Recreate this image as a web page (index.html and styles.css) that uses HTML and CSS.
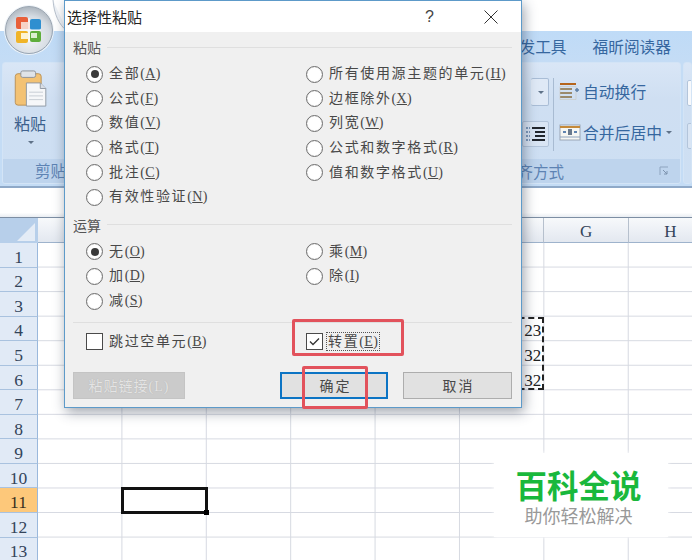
FILE: index.html
```html
<!DOCTYPE html>
<html lang="zh-CN">
<head>
<meta charset="utf-8">
<title>选择性粘贴</title>
<link rel="stylesheet" href="styles.css">
</head>
<body>
<div class="app">
  <header class="top">
    <div class="office-btn">
      <svg width="30" height="30" viewBox="0 0 30 30">
        <rect x="2" y="2" width="12" height="12" rx="2" fill="#e8603a"/>
        <rect x="16" y="4" width="11" height="11" rx="2" fill="#2f8fd0"/>
        <rect x="2" y="16" width="12" height="12" rx="2" fill="#f0b428"/>
        <rect x="16" y="16" width="11" height="11" rx="2" fill="#5fae3c"/>
        <rect x="7" y="7" width="9" height="7" fill="#f6d3c6"/>
        <rect x="7" y="18" width="8" height="6" fill="#fdf3d2"/>
        <rect x="17" y="18" width="6" height="5" fill="#dcefd0"/>
        <path d="M15 3v24M3 15h24" stroke="#fff" stroke-opacity=".65" stroke-width="1.5"/>
      </svg>
    </div>
    <svg class="qat-arc" width="16" height="32" viewBox="0 0 16 32"><path d="M1 0c1 14 6 25 14 31" fill="#eef2f7" stroke="#b9c2cd"/></svg>
  </header>
  <nav class="tabs">
    <span>发工具</span>
    <span>福昕阅读器</span>
  </nav>
  <section class="ribbon">
    <div class="group group-clip">
      <div class="group-body">
        <div class="paste">
          <svg width="34" height="37" viewBox="0 0 36 40">
            <rect x="1" y="4" width="28" height="34" rx="3" fill="#f3c274" stroke="#b98f55"/>
            <rect x="7" y="1" width="16" height="7" rx="2" fill="#dfe3e8" stroke="#8b8f96"/>
            <path d="M13 14h15l6 6v19H13z" fill="#f6f7f9" stroke="#8d96a2"/>
            <path d="M28 14v6h6" fill="#d9dee5" stroke="#8d96a2"/>
            <path d="M16 24h15M16 28h15M16 32h15" stroke="#c5cbd3"/>
          </svg>
          <span class="paste-label">粘贴</span>
          <i class="caret"></i>
        </div>
      </div>
      <div class="group-label label-clip">剪贴板</div>
    </div>
    <div class="group group-align">
      <div class="group-body align-body">
        <div class="tool-col">
          <div class="combo-end"><i class="caret"></i></div>
          <div class="indent-btn">
            <svg width="22" height="18" viewBox="0 0 22 18"><path d="M1 3h4M1 7h4M1 11h4M1 15h4" stroke="#5d7fa6" stroke-width="1.5" stroke-dasharray="2 1"/><path d="M7 3h13M10 7h10M10 11h10M7 15h13" stroke="#22272e" stroke-width="2"/></svg>
          </div>
        </div>
        <div class="sep"></div>
        <div class="cmd-col">
          <div class="cmd">
            <svg width="22" height="20" viewBox="0 0 22 20"><path d="M1 3h16" stroke="#b5651d" stroke-width="2"/><path d="M1 8h12M1 12h12M1 16h12" stroke="#9a8a6c" stroke-width="2"/><path d="M1 5.500h16v13H1z" fill="none" stroke="#c9c2b2" stroke-width=".5"/><path d="M16 9h4M18 7v4" stroke="#5d7fa6" stroke-width="1.500"/></svg>
            <span>自动换行</span>
          </div>
          <div class="cmd">
            <svg width="22" height="20" viewBox="0 0 22 20"><rect x="1" y="3" width="20" height="15" fill="#f7f7f2" stroke="#9aa6b5"/><path d="M1 5h20" stroke="#c58a3a" stroke-width="2"/><path d="M1 15h20" stroke="#8fa4bd"/><path d="M4 10h3M15 10h3" stroke="#2f5f9a" stroke-width="1.500"/><rect x="9" y="7" width="4" height="6" fill="#6a7a8c"/></svg>
            <span>合并后居中</span>
            <i class="caret"></i>
          </div>
        </div>
      </div>
      <div class="group-label label-align">
        <span>齐方式</span>
        <svg width="10" height="10" viewBox="0 0 10 10"><path d="M1 9V1h8" fill="none" stroke="#8ea4bf"/><path d="M4 4l4 4M8 5v3H5" fill="none" stroke="#7d93ae"/></svg>
      </div>
    </div>
    <div class="group group-next">
      <div class="next-a"></div>
      <div class="next-b"></div>
    </div>
  </section>
  <div class="formula"><div class="name-box"></div></div>
  <main class="sheet">
    <div class="corner"></div>
    <div class="col-h"></div><div class="col-h"></div><div class="col-h"></div><div class="col-h"></div><div class="col-h"></div><div class="col-h"></div><div class="col-h">G</div><div class="col-h">H</div>
    <div class="row-h">1</div><div class="row-h">2</div><div class="row-h">3</div><div class="row-h">4</div><div class="row-h">5</div><div class="row-h">6</div><div class="row-h">7</div><div class="row-h">8</div><div class="row-h">9</div><div class="row-h">10</div>
    <div class="row-h row-active">11</div><div class="row-h">12</div><div class="row-h">13</div>
    <div class="val r4">23</div>
    <div class="val r5">32</div>
    <div class="val r6">32</div>
    <div class="ants"></div>
    <div class="selected"></div>
  </main>
</div>

<div class="dialog">
  <div class="dlg-title">
    <span class="dlg-name">选择性粘贴</span>
    <span class="dlg-help">?</span>
    <svg class="dlg-close" width="14" height="14" viewBox="0 0 14 14"><path d="M0.500 0.500l13 13M13.500 0.500l-13 13" stroke="#333" stroke-width="1"/></svg>
  </div>
  <div class="dlg-body">
    <div class="legend"><span>粘贴</span></div>
    <div class="opts opts-paste">
      <label class="opt"><i class="radio on"></i>全部<b class="key">(<u>A</u>)</b></label>
      <label class="opt"><i class="radio"></i>所有使用源主题的单元<b class="key">(<u>H</u>)</b></label>
      <label class="opt"><i class="radio"></i>公式<b class="key">(<u>F</u>)</b></label>
      <label class="opt"><i class="radio"></i>边框除外<b class="key">(<u>X</u>)</b></label>
      <label class="opt"><i class="radio"></i>数值<b class="key">(<u>V</u>)</b></label>
      <label class="opt"><i class="radio"></i>列宽<b class="key">(<u>W</u>)</b></label>
      <label class="opt"><i class="radio"></i>格式<b class="key">(<u>T</u>)</b></label>
      <label class="opt"><i class="radio"></i>公式和数字格式<b class="key">(<u>R</u>)</b></label>
      <label class="opt"><i class="radio"></i>批注<b class="key">(<u>C</u>)</b></label>
      <label class="opt"><i class="radio"></i>值和数字格式<b class="key">(<u>U</u>)</b></label>
      <label class="opt"><i class="radio"></i>有效性验证<b class="key">(<u>N</u>)</b></label>
    </div>
    <div class="legend legend-op"><span>运算</span></div>
    <div class="opts opts-op">
      <label class="opt"><i class="radio on"></i>无<b class="key">(<u>O</u>)</b></label>
      <label class="opt"><i class="radio"></i>乘<b class="key">(<u>M</u>)</b></label>
      <label class="opt"><i class="radio"></i>加<b class="key">(<u>D</u>)</b></label>
      <label class="opt"><i class="radio"></i>除<b class="key">(<u>I</u>)</b></label>
      <label class="opt"><i class="radio"></i>减<b class="key">(<u>S</u>)</b></label>
    </div>
    <hr class="rule">
    <div class="opts opts-check">
      <label class="opt"><i class="check"></i>跳过空单元<b class="key">(<u>B</u>)</b></label>
      <label class="opt"><i class="check">
        <svg width="15" height="15" viewBox="0 0 15 15"><path d="M3 7.500l3 3 6-6" fill="none" stroke="#333" stroke-width="1.300"/></svg>
      </i><span class="focus">转置<b class="key">(<u>E</u>)</b></span></label>
    </div>
    <div class="btns">
      <button class="btn btn-off" type="button">粘贴链接(L)</button>
      <button class="btn btn-ok" type="button">确定</button>
      <button class="btn btn-cancel" type="button">取消</button>
    </div>
  </div>
</div>

<div class="mark mark-transpose"></div>
<div class="mark mark-ok"></div>

<aside class="watermark">
  <div class="wm-title">百科全说</div>
  <div class="wm-sub">助你轻松解决</div>
</aside>
</body>
</html>
```
FILE: styles.css
```css
* { box-sizing: border-box; }
html, body { margin: 0; height: 100%; }
body {
  position: relative;
  width: 692px;
  height: 560px;
  overflow: hidden;
  background: #fff;
  font-family: "Noto Sans CJK SC", "Liberation Sans", sans-serif;
}
.app { display: flex; flex-direction: column; height: 560px; overflow: hidden; }

/* title strip */
.top { height: 31px; background: #fff; flex: none; position: relative; }
.office-btn {
  position: absolute; left: 5px; top: 6px; z-index: 2;
  width: 48px; height: 48px; border-radius: 50%;
  display: flex; align-items: center; justify-content: center;
  background: radial-gradient(circle at 50% 65%, #f4f6f8 0, #d5dbe2 55%, #a9b2bb 82%, #e4e8ec 100%);
  border: 1px solid #9aa5b1;
  box-shadow: 0 0 0 1px #eef3f8;
}
.qat-arc { position: absolute; left: 52px; top: 0; }

/* tabs */
.tabs {
  height: 31px; flex: none;
  background: linear-gradient(#bfdbf7, #c4dcf5);
  display: flex; justify-content: flex-end; align-items: center; gap: 26px;
  padding: 0 21px 0 0;
  font-size: 15.700px; color: #36679f;
}

/* ribbon */
.ribbon {
  height: 126px; flex: none;
  display: flex; gap: 2px;
  padding-left: 2px; padding-bottom: 2px;
  background: #c4dcf5;
  border-bottom: 2px solid #8fa9c8;
}
.group {
  display: flex; flex-direction: column;
  border-radius: 3px;
  background: linear-gradient(#d9e6f6, #cfdff2 30%, #cddff3);
  border: 1px solid #d3e4f6;
  overflow: hidden;
}
.group-body { flex: 1; min-height: 0; }
.group-label { height: 24px; flex: none; background: #bed4ed; color: #5d83b3; font-size: 15.500px; line-height: 23px; }
.group-clip { flex: none; width: 100px; }
.group-align { flex: 1; }
.group-next { flex: none; width: 9px; padding: 17px 0 0 3px; gap: 17px; }
.paste { width: 60px; padding: 7px 0 0 11px; display: flex; flex-direction: column; align-items: flex-start; }
.paste-label { font-size: 16px; line-height: 22px; margin-top: 5px; color: #3c5f8c; }
.paste .caret { margin: 7px 0 0 14px; }
.label-clip { padding-left: 32px; white-space: nowrap; }
.caret { display: inline-block; width: 0; height: 0; border: 3px solid transparent; border-top: 3px solid #5f7288; border-bottom: 0; }

.align-body { display: flex; justify-content: flex-end; align-items: flex-start; padding-right: 8px; padding-top: 15px; }
.tool-col { display: flex; flex-direction: column; width: 29px; align-items: flex-end; }
.combo-end { width: 18px; height: 28px; display: flex; align-items: center; justify-content: flex-end; padding-right: 4px; border: 1px solid #a9bdd6; border-left: 0; border-radius: 2px; background: #dfe9f6; }
.indent-btn { margin-top: 15px; width: 27px; height: 26px; display: flex; align-items: center; justify-content: center; border: 1px solid #b3c5db; border-radius: 2px; background: #d9e5f4; }
.sep { width: 1px; height: 73px; background: #a8bbd2; margin: 0 5px 0 4px; }
.cmd-col { display: flex; flex-direction: column; gap: 17px; width: 113px; padding-top: 1px; }
.cmd { display: flex; align-items: center; gap: 2px; height: 24px; font-size: 15.800px; color: #36679f; white-space: nowrap; }
.cmd svg { flex: none; }
.cmd .caret { margin-left: 2px; }
.label-align { display: flex; justify-content: space-between; align-items: center; padding: 0 11px 0 0; }
.label-align span { margin-left: auto; margin-right: 95px; }
.next-a, .next-b { width: 12px; height: 26px; border: 1px solid #b3c5db; border-radius: 2px; background: #f7f9fc; flex: none; }
.next-b { background: #d9e5f4; }

/* formula bar */
.formula { height: 30px; flex: none; background: linear-gradient(#fff, #fff 85%, #e9edf2); border-bottom: 1px solid #7d8ea3; }
.name-box { width: 64px; height: 100%; }

/* sheet */
.sheet {
  flex: 1; min-height: 0;
  display: grid;
  grid-template-columns: 38px repeat(8, 84.400px);
  grid-template-rows: 25px repeat(13, 24.550px);
  grid-auto-flow: row;
  background-color: #fff;
  background-image:
    linear-gradient(to left, #d6d9e1 1px, transparent 1px),
    linear-gradient(to top, #d6d9e1 1px, transparent 1px);
  background-size: 84.400px 24.550px;
  background-position: 38px 25px;
  overflow: hidden;
}
.corner { background: #b7cfea; position: relative; }
.corner::after {
  content: ""; position: absolute; left: 17px; top: 5px; width: 18px; height: 18px;
  background: #e4ecf6;
  clip-path: polygon(100% 0, 100% 100%, 0 100%);
}
.col-h {
  display: flex; align-items: center; justify-content: center;
  padding-top: 3px;
  font: 17px "Liberation Serif", serif; color: #33445a;
  background: linear-gradient(#f7f9fb, #e3e8f0);
  border-right: 1px solid #b6c0cd;
  border-bottom: 1px solid #9eb3cc;
}
.row-h {
  grid-column: 1;
  display: flex; align-items: center; justify-content: center;
  padding-top: 5px;
  font: 17.500px "Liberation Serif", serif; color: #33445a;
  background: #e1eaf6;
  border-right: 1px solid #9ab8dc;
  border-bottom: 1px solid #a9c2df;
}
.row-active { background: #fdc87a; color: #3a3020; }
.val {
  grid-column: 7;
  display: flex; align-items: center; justify-content: flex-end;
  padding: 5px 3px 0 0;
  font: 17px "Liberation Serif", serif; color: #222;
}
.r4 { grid-row: 5; }
.r5 { grid-row: 6; }
.r6 { grid-row: 7; }
.ants { grid-column: 7; grid-row: 5 / 8; border: 2px dashed #222; margin: 0 0 0 0; }
.selected { grid-column: 3; grid-row: 12; border: 3px solid #111; margin: -1px; position: relative; }
.selected::after { content: ""; position: absolute; right: -4px; bottom: -4px; width: 5px; height: 5px; background: #000; }

/* dialog */
.dialog {
  position: absolute; left: 64px; top: 0;
  width: 458px; height: 408px;
  background: #f0f0f0;
  border: 1px solid #5d9ac9;
  box-shadow: 2px 4px 12px rgba(40, 50, 70, .45);
  font-family: "Liberation Serif", "Noto Sans CJK SC", serif;
  color: #484848;
  display: flex; flex-direction: column;
}
.dlg-title {
  height: 31px; flex: none;
  background: #fff;
  display: flex; align-items: center;
  padding: 0 23px 0 2px;
}
.dlg-name { font: 15px "Noto Sans CJK SC", sans-serif; color: #222; flex: 1; }
.dlg-help { font: 16px "Liberation Sans", sans-serif; color: #444; margin-right: 50px; }
.dlg-body { flex: 1; padding: 5px 9px 0 8px; display: flex; flex-direction: column; }
.legend { display: flex; align-items: center; gap: 6px; height: 20px; font: 14px/20px "Noto Sans CJK SC", sans-serif; color: #555; }
.legend::after { content: ""; flex: 1; height: 1px; background: #dfdfdf; }
.legend-op { margin-top: 5px; }
.opts { display: grid; grid-template-columns: 220px 1fr; padding-left: 13px; grid-auto-rows: 24.600px; }
.opts-paste { margin-top: 5px; }
.opts-op { margin-top: 5px; }
.opt { display: flex; align-items: center; font-size: 14px; line-height: 20px; letter-spacing: 1.650px; white-space: nowrap; }
.key { font-weight: 400; margin-left: 0; letter-spacing: .3px; font-family: "Liberation Serif", serif; }
.radio {
  flex: none; width: 17px; height: 17px; margin-right: 6px;
  border: 1px solid #6e6e6e; border-radius: 50%; background: #fff;
  display: flex; align-items: center; justify-content: center;
  box-shadow: inset 0 0 1px #bbb;
}
.radio.on::before { content: ""; width: 8px; height: 8px; border-radius: 50%; background: #3a3a3a; }
.check {
  flex: none; width: 17px; height: 17px; margin-right: 6px;
  border: 1px solid #4a4a4a; background: #fff;
  display: flex; align-items: center; justify-content: center;
}
.focus { display: inline-block; border: 1px dotted #555; padding: 0 1px; margin-left: -3px; line-height: 17px; }
.rule { border: 0; height: 1px; background: #dfdfdf; margin: 9px 0 0; flex: none; }
.opts-check { margin-top: 6px; }
.btns { display: flex; margin-top: 18px; }
.btn {
  height: 27px; padding: 0; border-radius: 0;
  background: #e1e1e1; border: 1px solid #adadad; color: #484848;
  font: 14px "Liberation Serif", "Noto Sans CJK SC", serif; letter-spacing: 2px;
}
.btn-off { width: 112px; background: #cbcbcb; border-color: #c4c4c4; color: #e4e4e4; letter-spacing: 1px; margin-right: 95px; text-shadow: 0 0 1px #aaa; }
.btn-ok { width: 108px; border: 2px solid #0c74c4; margin-right: 15px; padding-left: 3px; }
.btn-cancel { width: 109px; padding-left: 2px; }

/* annotations */
.mark { position: absolute; border: 3px solid #e2525c; border-radius: 2px; pointer-events: none; }
.mark-transpose { left: 292px; top: 319px; width: 112px; height: 37px; }
.mark-ok { left: 302px; top: 366px; width: 66px; height: 43px; }

/* watermark */
.watermark {
  position: absolute; left: 494px; top: 453px; width: 174px; height: 84px;
  background: #fff; box-shadow: 0 0 4px #fff;
  display: flex; flex-direction: column; align-items: center;
  padding-right: 5px;
  font-family: "Noto Sans CJK SC", sans-serif;
}
.wm-title { font-size: 31.500px; line-height: 36px; margin-top: 13px; font-weight: 700; color: #19b83c; }
.wm-sub { font-size: 18px; line-height: 24px; margin-top: 1px; color: #999; }
```
